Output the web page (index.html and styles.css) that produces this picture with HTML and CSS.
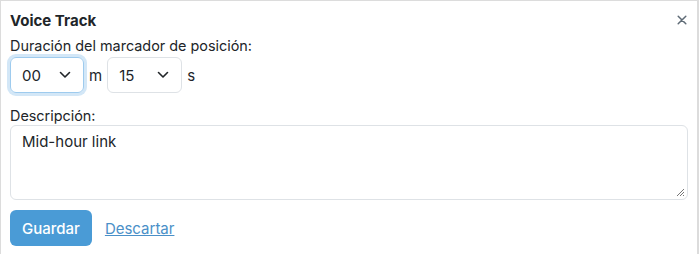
FILE: index.html
```html
<!DOCTYPE html>
<html lang="es">
<head>
<meta charset="utf-8">
<title>Voice Track</title>
<link rel="stylesheet" href="styles.css">
</head>
<body>
<div class="panel">
  <div class="header">
    <h1 class="title">Voice Track</h1>
    <button class="close" type="button" aria-label="Cerrar">
      <svg width="10" height="10" viewBox="0 0 10 10"><path d="M1.2 1.2L8.8 8.8M8.8 1.2L1.2 8.8" stroke="#5f6b76" stroke-width="1.5" stroke-linecap="round"/></svg>
    </button>
  </div>
  <div class="field first">
    <label class="label">Duración del marcador de posición:</label>
    <div class="duration">
      <div class="select focus"><span>00</span><svg class="chev" width="12" height="8" viewBox="0 0 12 8"><path d="M1.5 1.5L6 6L10.5 1.5" fill="none" stroke="#212529" stroke-width="1.6" stroke-linecap="round" stroke-linejoin="round"/></svg></div>
      <span class="unit">m</span>
      <div class="select"><span>15</span><svg class="chev" width="12" height="8" viewBox="0 0 12 8"><path d="M1.5 1.5L6 6L10.5 1.5" fill="none" stroke="#212529" stroke-width="1.6" stroke-linecap="round" stroke-linejoin="round"/></svg></div>
      <span class="unit">s</span>
    </div>
  </div>
  <div class="field second">
    <label class="label">Descripción:</label>
    <div class="textarea">Mid-hour link<svg class="grip" width="9" height="9" viewBox="0 0 9 9"><path d="M8 1L1 8M8 4L4 8M8 7L7 8" stroke="#777" stroke-width="1"/></svg></div>
  </div>
  <div class="actions">
    <button class="btn" type="button">Guardar</button>
    <a class="link" href="#">Descartar</a>
  </div>
</div>
</body>
</html>
```

FILE: styles.css
```css
* { box-sizing: border-box; }
html, body { margin: 0; padding: 0; background: #fff; }
body {
  font-family: Inter, "Liberation Sans", sans-serif;
  color: #212529;
  font-size: 14px;
}
.panel {
  width: 699px;
  border: 1px solid #dcdcdc;
  border-bottom: 0;
  border-right-width: 2px;
  padding: 8px 9px 8px 9px;
}
.header {
  display: flex;
  justify-content: space-between;
  align-items: center;
  height: 22px;
}
.title {
  margin: 0;
  font-size: 15px;
  font-weight: 700;
}
.close {
  border: 0;
  background: none;
  padding: 0;
  margin-right: 1px;
  display: flex;
}
.field.first { margin-top: 6px; }
.field.second { margin-top: 14px; }
.label {
  display: block;
  font-size: 14.4px;
  line-height: 18px;
}
.duration {
  display: flex;
  align-items: center;
  gap: 5px;
  margin-top: 2px;
}
.select {
  width: 75px;
  height: 36px;
  border: 1px solid #dee2e6;
  border-radius: 6px;
  display: flex;
  align-items: center;
  justify-content: space-between;
  padding: 0 12px 0 11px;
  font-size: 15px;
}
.select.focus {
  width: 74px;
  border-color: #9ecbee;
  box-shadow: 0 0 0 3px #d3e7f7;
}
.unit { font-size: 15px; }
.textarea {
  position: relative;
  width: 100%;
  height: 75px;
  border: 1px solid #dee2e6;
  border-radius: 6px;
  padding: 5px 11px;
  font-size: 15px;
  line-height: 22px;
}
.grip { position: absolute; right: 2px; bottom: 2px; }
.actions {
  display: flex;
  align-items: center;
  gap: 13px;
  margin-top: 10px;
}
.btn {
  font-family: inherit;
  height: 36px;
  padding: 0 12px;
  border: 0;
  border-radius: 6px;
  background: #4a9bd6;
  color: #fff;
  font-size: 15px;
  font-weight: 500;
}
.link {
  color: #4a90c8;
  font-size: 15px;
  text-decoration: underline;
}
```
